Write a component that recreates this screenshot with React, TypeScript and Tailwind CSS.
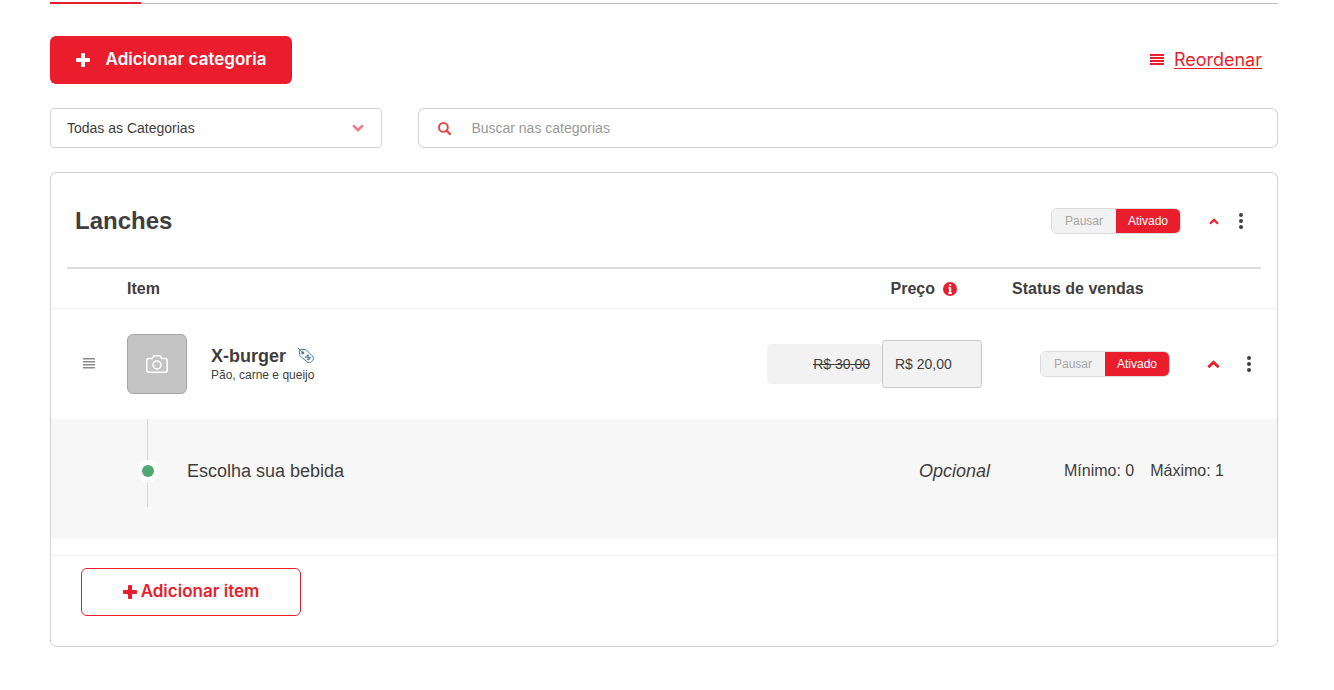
import { useState } from "react";

type SalesStatus = "paused" | "active";

const item = {
  name: "X-burger",
  description: "Pão, carne e queijo",
  originalPrice: "R$ 30,00",
  price: "R$ 20,00",
};

const PlusIcon = () => (
  <svg viewBox="0 0 14 14" className="w-3.5 h-3.5" fill="currentColor" aria-hidden="true">
    <rect x="5" y="0" width="4" height="14" rx="0.8" />
    <rect x="0" y="5" width="14" height="4" rx="0.8" />
  </svg>
);

const SearchIcon = () => (
  <svg viewBox="0 0 13 13" className="w-[13px] h-[13px]" fill="none" stroke="currentColor" aria-hidden="true">
    <circle cx="5.4" cy="5.4" r="4.4" strokeWidth="2" />
    <path d="M8.6 8.6 12 12" strokeWidth="2.4" strokeLinecap="round" />
  </svg>
);

const Chevron = ({ className }: { className: string }) => (
  <svg viewBox="0 0 12 8" className={className} fill="none" stroke="currentColor" aria-hidden="true">
    <path d="M1.200 6.600 6 1.900l4.800 4.700" strokeWidth="2.6" />
  </svg>
);

const DotsIcon = () => (
  <svg viewBox="0 0 4 16" className="w-1 h-4" fill="currentColor" aria-hidden="true">
    <circle cx="2" cy="2" r="2" />
    <circle cx="2" cy="8" r="2" />
    <circle cx="2" cy="14" r="2" />
  </svg>
);

const CameraIcon = () => (
  <svg viewBox="0 0 22 18" className="w-[22px] h-[18px]" fill="none" stroke="currentColor" strokeWidth="1.5" aria-hidden="true">
    <path d="M3 3.6h3.2l1.4-2.4c.2-.3.4-.4.7-.4h5.4c.3 0 .5.1.7.4l1.4 2.4H19c1.200 0 2.200 1 2.200 2.200v9.200c0 1.200-1 2.200-2.200 2.200H3c-1.200 0-2.200-1-2.200-2.200V5.800C.8 4.600 1.800 3.600 3 3.600Z" />
    <circle cx="11" cy="10" r="4" />
  </svg>
);

const PriceTagIcon = () => (
  <svg viewBox="0 0 16 16" className="w-4 h-4" fill="none" stroke="#3f7ba0" aria-hidden="true">
    <path d="M1.500 6.600 1.300 3.200c0-1.100.8-1.900 1.900-1.900l4 .3c.6 0 1 .3 1.400.6l5.700 5.700c1.400 1.400 1.400 3.100.4 4.700-1.200 1.700-3 2.500-4.700 1.900-.5-.2-.9-.5-1.300-.9L2.200 8c-.4-.4-.6-.9-.7-1.400Z" />
    <path d="M0 0l4.500 4.500" />
    <circle cx="4.800" cy="4.900" r="1.100" fill="#3f7ba0" />
    <path d="M11 7.700c-1-.9-2.100-.2-1.900.8.200 1 2.200.8 2.300 1.900.1 1.100-1.400 1.500-2.400.5M7 8.700l1.200 1M11.600 9.100l1.200 1" strokeWidth="1.300" />
  </svg>
);

const InfoIcon = () => (
  <svg viewBox="0 0 14 14" className="w-3.5 h-3.5" aria-hidden="true">
    <circle cx="7" cy="7" r="7" fill="#ea1d2c" />
    <path d="M6 2.200h2.200v1.900H6zM5.300 5.200h2.900v5.300h.8v1.400H5.200v-1.400H6V6.600h-.7z" fill="#fff" />
  </svg>
);

function StatusToggle({ label }: { label: string }) {
  const [status, setStatus] = useState<SalesStatus>("active");

  const getOptionColor = (option: SalesStatus) =>
    option === status ? "bg-[#ea1d2c] text-white" : "bg-[#f2f2f2] text-[#a6a6a6]";

  return (
    <div
      role="group"
      aria-label={label}
      className="flex w-[130px] h-[26px] border border-[#dcdcdc] rounded-md overflow-hidden text-xs"
    >
      <button type="button" onClick={() => setStatus("paused")} className={`flex-1 ${getOptionColor("paused")}`}>
        Pausar
      </button>
      <button type="button" onClick={() => setStatus("active")} className={`flex-1 ${getOptionColor("active")}`}>
        Ativado
      </button>
    </div>
  );
}

export default function App() {
  return (
    <div className="min-h-screen bg-white pl-[50px] pr-14 pb-10 text-[#3f3e3e] font-['Liberation_Sans',Arial,sans-serif]">
      {/* Tab underline */}
      <div className="flex pt-0.5 border-b border-[#bdbdbd]">
        <div className="w-[91px] h-0.5 -mb-px bg-[#ea1d2c]" />
      </div>

      {/* Actions */}
      <div className="flex items-center justify-between mt-8 pr-4">
        <button
          type="button"
          className="flex items-center justify-center gap-4 w-[242px] h-12 bg-[#ea1d2c] text-white rounded-md text-[17px] font-semibold font-['Inter',sans-serif]"
        >
          <PlusIcon />
          Adicionar categoria
        </button>
        <a href="#reordenar" className="flex items-center gap-2.5 text-lg text-[#ea1d2c] font-['Inter',sans-serif]">
          <svg viewBox="0 0 14 12" className="w-3.5 h-3" fill="currentColor" aria-hidden="true">
            <path d="M0 0h14v2H0zM0 3h14v2H0zM0 6h14v2H0zM0 9h14v2H0z" />
          </svg>
          <span className="underline underline-offset-2">Reordenar</span>
        </a>
      </div>

      {/* Filters */}
      <div className="flex mt-6">
        <div className="relative w-[27%] h-10">
          <select
            aria-label="Categoria"
            className="w-full h-full pl-4 pr-10 appearance-none border border-[#d2d2d2] rounded bg-white text-sm"
          >
            <option>Todas as Categorias</option>
            <option>Lanches</option>
          </select>
          <span className="absolute right-[18px] inset-y-0 flex items-center pointer-events-none text-[#f4777f]">
            <Chevron className="w-3 h-2 rotate-180" />
          </span>
        </div>
        <label className="flex flex-1 items-center gap-5 h-10 ml-[3%] pl-[19px] pr-5 border border-[#d2d2d2] rounded-md text-[#dd4b4b]">
          <SearchIcon />
          <input
            type="search"
            aria-label="Buscar nas categorias"
            placeholder="Buscar nas categorias"
            className="flex-1 text-sm text-[#3f3e3e] placeholder:text-[#999999] outline-none"
          />
        </label>
      </div>

      {/* Category card */}
      <section className="mt-6 border border-[#d2d2d2] rounded-md">
        <div className="flex items-center h-24 mx-4 pt-0.5 pl-2 pr-[18px] border-b-2 border-[#dcdcdc]">
          <h2 className="flex-1 text-2xl font-bold">Lanches</h2>
          <StatusToggle label="Status da categoria Lanches" />
          <button type="button" aria-label="Recolher categoria" className="ml-7 text-[#ea1d2c]">
            <Chevron className="w-2.5 h-[7px]" />
          </button>
          <button type="button" aria-label="Mais opções" className="ml-5">
            <DotsIcon />
          </button>
        </div>

        <table className="w-full table-fixed border-separate border-spacing-0 text-left">
          <colgroup>
            <col className="w-[76px]" />
            <col />
            <col className="w-[215px]" />
            <col className="w-[203px]" />
            <col className="w-[92px]" />
          </colgroup>
          <thead>
            <tr className="h-10">
              <th className="p-0 border-b border-[#f0f0f0]" />
              <th className="p-0 border-b border-[#f0f0f0]">Item</th>
              <th className="p-0 border-b border-[#f0f0f0]">
                <div className="flex items-center justify-end gap-2 pr-[25px]">
                  Preço
                  <InfoIcon />
                </div>
              </th>
              <th className="p-0 pl-[30px] border-b border-[#f0f0f0]">Status de vendas</th>
              <th className="p-0 border-b border-[#f0f0f0]" />
            </tr>
          </thead>
          <tbody>
            <tr className="h-[110px]">
              <td className="p-0 pl-8">
                <button type="button" aria-label="Mover item" className="block text-[#8a8a8a]">
                  <svg viewBox="0 0 12 12" className="w-3 h-3" fill="currentColor" aria-hidden="true">
                    <path d="M0 0h12v1.500H0zM0 3h12v1.500H0zM0 6h12v1.500H0zM0 9h12v1.500H0z" />
                  </svg>
                </button>
              </td>
              <td className="p-0">
                <div className="flex items-center gap-6">
                  <button
                    type="button"
                    aria-label="Adicionar foto"
                    className="flex items-center justify-center w-15 h-15 bg-[#c4c4c4] border border-[#a6a6a6] rounded-md text-white"
                  >
                    <CameraIcon />
                  </button>
                  <div>
                    <h3 className="flex items-center gap-3 text-lg leading-[22px] font-bold">
                      {item.name}
                      <PriceTagIcon />
                    </h3>
                    <p className="text-xs leading-4">{item.description}</p>
                  </div>
                </div>
              </td>
              <td className="p-0">
                <div className="flex items-center text-sm">
                  <input
                    aria-label="Preço original"
                    defaultValue={item.originalPrice}
                    className="w-[115px] h-10 px-3 bg-[#f2f2f2] rounded text-right line-through"
                  />
                  <input
                    aria-label="Preço com desconto"
                    defaultValue={item.price}
                    className="w-[100px] h-12 px-3 bg-[#f2f2f2] border border-[#c8c8c8] rounded"
                  />
                </div>
              </td>
              <td className="p-0 pl-[58px]">
                <StatusToggle label="Status de vendas de X-burger" />
              </td>
              <td className="p-0">
                <div className="flex items-center justify-between pl-[22px] pr-[26px]">
                  <button type="button" aria-label="Recolher item" className="text-[#ea1d2c]">
                    <Chevron className="w-[13px] h-[9px]" />
                  </button>
                  <button type="button" aria-label="Mais opções do item">
                    <DotsIcon />
                  </button>
                </div>
              </td>
            </tr>
            <tr className="h-30 bg-[#f7f7f7]">
              <td colSpan={5} className="p-0">
                <div className="flex items-center h-30 pl-[86px] pr-[53px] pb-4">
                  <div className="flex flex-col items-center self-start w-[22px] h-[88px]">
                    <div className="w-px h-[41px] mr-px bg-[#d6d6d6]" />
                    <div className="flex items-center justify-center w-[22px] h-[22px] bg-white rounded-full">
                      <div className="w-3 h-3 bg-[#50a773] rounded-full" />
                    </div>
                    <div className="w-px flex-1 mr-px bg-[#d6d6d6]" />
                  </div>
                  <span className="flex-1 ml-7 text-lg">Escolha sua bebida</span>
                  <em className="mr-[74px] text-lg">Opcional</em>
                  <span className="mr-4">Mínimo: 0</span>
                  <span>Máximo: 1</span>
                </div>
              </td>
            </tr>
          </tbody>
        </table>

        {/* Footer */}
        <div className="mt-4 pt-3 pb-[30px] pl-[30px] border-t border-[#f0f0f0]">
          <button
            type="button"
            className="flex items-center justify-center gap-1 w-[220px] h-12 border border-[#ea1d2c] rounded-md text-[#ea1d2c] text-[17px] font-semibold font-['Inter',sans-serif]"
          >
            <PlusIcon />
            Adicionar item
          </button>
        </div>
      </section>
    </div>
  );
}
